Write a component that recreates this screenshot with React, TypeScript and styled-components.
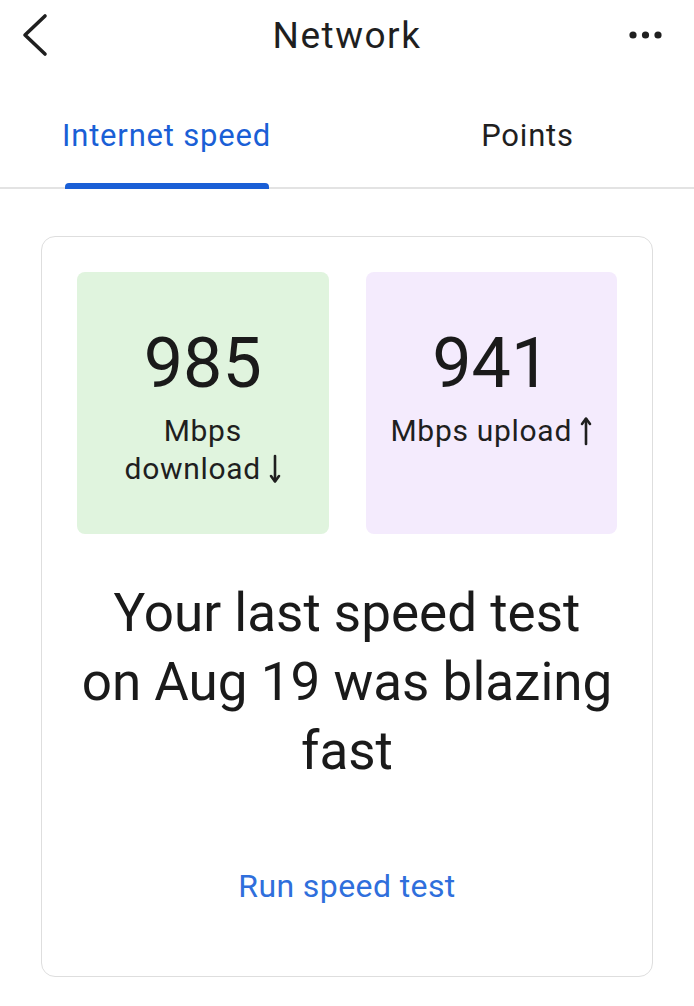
import styled, { createGlobalStyle } from "styled-components";

const GlobalStyle = createGlobalStyle`
  body {
    margin: 0;
    background: #ffffff;
    font-family: Roboto, "Noto Sans", sans-serif;
    color: #1f1f1f;
  }
`;

const Page = styled.div`
  width: 694px;
  min-height: 1006px;
  background: #ffffff;
`;

const TopBar = styled.header`
  height: 70px;
  display: grid;
  grid-template-columns: 80px 1fr 80px;
  align-items: center;
`;

const IconButton = styled.button<{ $align: "start" | "end" }>`
  display: flex;
  justify-content: ${(p) => (p.$align === "start" ? "flex-start" : "flex-end")};
  padding: ${(p) => (p.$align === "start" ? "0 0 0 20px" : "0 30px 0 0")};
  background: none;
  border: none;
  cursor: pointer;
`;

const Title = styled.h1`
  margin: 0;
  text-align: center;
  font-size: 37px;
  font-weight: 400;
  letter-spacing: 1.5px;
  color: #1f1f1f;
`;

const Tabs = styled.nav`
  display: flex;
  gap: 28px;
  height: 117px;
  border-bottom: 2px solid #e3e3e3;
`;

const Tab = styled.button<{ $active?: boolean }>`
  flex: 1;
  display: flex;
  justify-content: center;
  background: none;
  border: none;
  padding: 0;
  cursor: pointer;
  font-family: Roboto, sans-serif;
  font-size: 31px;
  letter-spacing: 0.8px;
  color: ${(p) => (p.$active ? "#1a5fd6" : "#1f1f1f")};
`;

const TabLabel = styled.span<{ $active?: boolean }>`
  position: relative;
  display: flex;
  align-items: center;
  height: 100%;
  box-sizing: border-box;
  padding: 14px 0 0;

  &::after {
    content: "";
    display: ${(p) => (p.$active ? "block" : "none")};
    position: absolute;
    left: 3px;
    right: 2px;
    bottom: -2px;
    height: 6px;
    border-radius: 4px 4px 0 0;
    background: #1a5fd6;
  }
`;

const Card = styled.section`
  margin: 47px 41px 0;
  padding: 35px 35px 70px;
  border: 1.5px solid #dedede;
  border-radius: 14px;
  display: flex;
  flex-direction: column;
  align-items: center;
`;

const Stats = styled.div`
  width: 100%;
  display: grid;
  grid-template-columns: 1fr 1fr;
  gap: 37px;
`;

const StatBox = styled.div<{ $tone: "green" | "purple" }>`
  height: 262px;
  box-sizing: border-box;
  padding: 51px 4px 0;
  border-radius: 8px;
  background: ${(p) => (p.$tone === "green" ? "#e0f4de" : "#f4ebfd")};
  display: flex;
  flex-direction: column;
  align-items: center;
  text-align: center;
`;

const StatValue = styled.div`
  font-size: 70px;
  line-height: 80px;
  font-weight: 400;
  color: #1a1a1a;
`;

const StatLabel = styled.div`
  margin-top: 9px;
  font-size: 30px;
  line-height: 38px;
  letter-spacing: 0.7px;
  white-space: nowrap;
  color: #1f1f1f;
`;

const Arrow = styled.svg`
  width: 12px;
  height: 30px;
  margin-left: 8px;
  vertical-align: -5px;
`;

const Headline = styled.p`
  margin: 45px 0 0;
  font-size: 53px;
  line-height: 69px;
  text-align: center;
  color: #1a1a1a;
`;

const RunLink = styled.button`
  margin-top: 80px;
  background: none;
  border: none;
  padding: 0;
  cursor: pointer;
  font-family: Roboto, sans-serif;
  font-size: 32px;
  line-height: 40px;
  letter-spacing: 0.4px;
  color: #2f6fdc;
`;

function DirectionArrow({ up }: { up?: boolean }) {
  return (
    <Arrow viewBox="0 0 12 30" aria-hidden>
      <g
        transform={up ? undefined : "rotate(180 6 15)"}
        fill="none"
        stroke="#1f1f1f"
        strokeWidth="2.6"
        strokeLinecap="round"
        strokeLinejoin="round"
      >
        <path d="M6 3 V28" />
        <path d="M2 8 L6 2.5 L10 8" />
      </g>
    </Arrow>
  );
}

export default function App() {
  return (
    <Page>
      <GlobalStyle />
      <TopBar>
        <IconButton $align="start" aria-label="Back">
          <svg width="28" height="44" viewBox="0 0 28 44">
            <path
              d="M25 3 L5 22 L25 41"
              fill="none"
              stroke="#1f1f1f"
              strokeWidth="3.6"
              strokeLinecap="round"
              strokeLinejoin="round"
            />
          </svg>
        </IconButton>
        <Title>Network</Title>
        <IconButton $align="end" aria-label="More">
          <svg width="36" height="10" viewBox="0 0 36 10">
            <circle cx="5" cy="5" r="3.6" fill="#1f1f1f" />
            <circle cx="17.5" cy="5" r="3.6" fill="#1f1f1f" />
            <circle cx="30" cy="5" r="3.6" fill="#1f1f1f" />
          </svg>
        </IconButton>
      </TopBar>

      <Tabs>
        <Tab $active>
          <TabLabel $active>Internet speed</TabLabel>
        </Tab>
        <Tab>
          <TabLabel>Points</TabLabel>
        </Tab>
      </Tabs>

      <Card>
        <Stats>
          <StatBox $tone="green">
            <StatValue>985</StatValue>
            <StatLabel>
              Mbps
              <br />
              download
              <DirectionArrow />
            </StatLabel>
          </StatBox>
          <StatBox $tone="purple">
            <StatValue>941</StatValue>
            <StatLabel>
              Mbps upload
              <DirectionArrow up />
            </StatLabel>
          </StatBox>
        </Stats>
        <Headline>
          Your last speed test
          <br />
          on Aug 19 was blazing
          <br />
          fast
        </Headline>
        <RunLink>Run speed test</RunLink>
      </Card>
    </Page>
  );
}
